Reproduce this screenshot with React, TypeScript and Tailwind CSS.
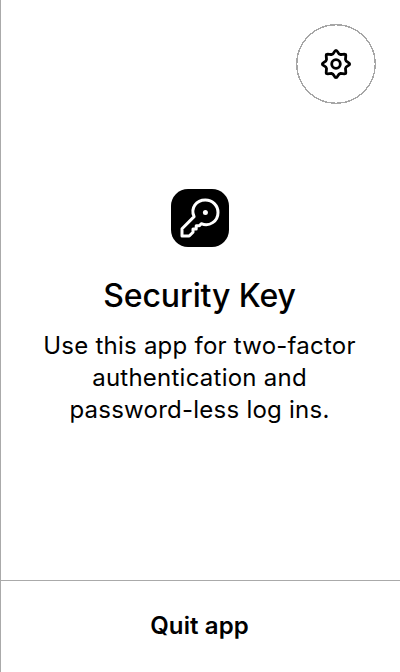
function GearIcon() {
  return (
    <svg width="32" height="32" viewBox="0 0 32 32" fill="none" stroke="#000" strokeWidth="2.8" strokeLinejoin="round">
      <path d="M16 2.3 C18 2.3 17.6 6.2 20.4 6.5 C22 6.6 24.4 5.8 25.6 6.4 C26.2 7.6 25.4 10 25.5 11.6 C25.8 14.4 29.7 14 29.7 16 C29.7 18 25.8 17.6 25.5 20.4 C25.4 22 26.2 24.4 25.6 25.6 C24.4 26.2 22 25.4 20.4 25.5 C17.6 25.8 18 29.7 16 29.7 C14 29.7 14.4 25.8 11.6 25.5 C10 25.4 7.6 26.2 6.4 25.6 C5.8 24.4 6.6 22 6.5 20.4 C6.2 17.6 2.3 18 2.3 16 C2.3 14 6.2 14.4 6.5 11.6 C6.6 10 5.8 7.6 6.4 6.4 C7.6 5.8 10 6.6 11.6 6.5 C14.4 6.2 14 2.3 16 2.3 Z" />
      <circle cx="16" cy="16" r="4.3" />
    </svg>
  );
}

function KeyIcon() {
  return (
    <svg width="58" height="58" viewBox="0 0 58 58" fill="none">
      <rect width="58" height="58" rx="17" fill="#000" />
      <path
        d="M23.1 27.6 C19.2 19.2 25.2 10.9 34.3 10.9 C41.5 10.9 47 16.5 47 23.4 C47 32.1 38.4 38.2 30.3 34.7 L28.4 36.8 H25.2 V40 H22 V43.2 L18.2 47 H11 V39.7 Z"
        stroke="#fff"
        strokeWidth="3"
        strokeLinejoin="round"
      />
      <circle cx="34.4" cy="23.4" r="2.5" fill="#fff" />
    </svg>
  );
}

export default function App() {
  return (
    <div className="flex h-[672px] w-[400px] flex-col border-l border-[#aaa] bg-white font-['Inter',sans-serif] text-black">
      <header className="flex justify-end p-6">
        <button aria-label="Settings" className="grid size-20 place-items-center">
          <svg width="80" height="80" shapeRendering="crispEdges" className="col-start-1 row-start-1">
            <circle cx="40" cy="40" r="39.3" fill="none" stroke="#a6a6a6" strokeWidth="1.4" />
          </svg>
          <span className="col-start-1 row-start-1">
            <GearIcon />
          </span>
        </button>
      </header>
      <main className="flex flex-1 flex-col items-center pt-[61px] pr-px text-center">
        <KeyIcon />
        <h1 className="mt-[29px] pr-px text-[32px] leading-10 font-medium tracking-[-0.1px]">Security Key</h1>
        <p className="mt-[14px] w-[330px] pr-px text-2xl leading-8 tracking-[0.24px]">
          Use this app for two-factor authentication and password-less log ins.
        </p>
      </main>
      <footer className="h-[92px] border-t border-[#aaa]">
        <button className="flex h-full w-full items-center justify-center pr-0.5 pb-0.5 text-2xl font-semibold tracking-[0.1px]">Quit app</button>
      </footer>
    </div>
  );
}
